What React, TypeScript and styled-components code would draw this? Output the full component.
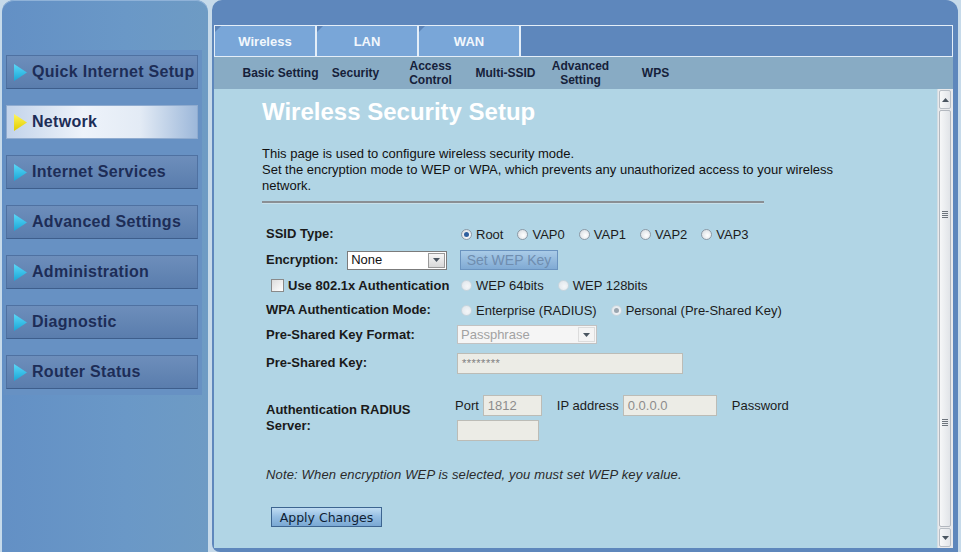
import React from 'react';
import styled, { createGlobalStyle, css } from 'styled-components';

const GlobalStyle = createGlobalStyle`
  html, body {
    margin: 0;
    padding: 0;
    background: #c6daea;
  }
  body {
    font-family: 'Liberation Sans', Arial, sans-serif;
  }
`;

const Page = styled.div`
  display: flex;
  width: 961px;
  height: 552px;
  overflow: hidden;
  background: #c6daea;
`;

/* ---------- left menu ---------- */

const Sidebar = styled.div`
  width: 206px;
  margin-left: 2px;
  padding-top: 50px;
  box-sizing: border-box;
  border-radius: 12px 12px 0 0;
  background: linear-gradient(to right, #6390c5, #6a98c7 60%, #6e9bc4);
  box-shadow: inset 0 1px 0 #8fb2d8;
`;

const Menu = styled.div`
  margin: 0 6px 0 2px;
  padding: 5px 2px 6px;
  display: flex;
  flex-direction: column;
  gap: 16px;
  background: #6791c3;
`;

const MenuButton = styled.div<{ $active?: boolean }>`
  width: 192px;
  height: 34px;
  box-sizing: border-box;
  display: flex;
  align-items: center;
  gap: 5px;
  padding-left: 7px;
  border: 1px solid #4f71a1;
  border-bottom-color: #3e5e8c;
  background: linear-gradient(#6d8ebb, #5a7dad);
  color: #1d2d57;
  font-size: 16px;
  font-weight: bold;
  letter-spacing: 0.3px;
  ${(p) =>
    p.$active &&
    css`
      border-color: #8fabcf;
      background: linear-gradient(to right, #c2d3ea, #eef3fa 40%, #e3ebf5 70%, #9db8da);
    `}
`;

const Arrow: React.FC<{ active?: boolean }> = ({ active }) => (
  <svg width="13" height="17" viewBox="0 0 13 17">
    <defs>
      <linearGradient id={active ? 'ay' : 'ab'} x1="0" y1="0" x2="0" y2="1">
        <stop offset="0" stopColor={active ? '#fff55a' : '#5ad8f8'} />
        <stop offset="1" stopColor={active ? '#e0cc00' : '#1aa6d6'} />
      </linearGradient>
    </defs>
    <polygon points="0,0 13,8.5 0,17" fill={`url(#${active ? 'ay' : 'ab'})`} />
  </svg>
);

/* ---------- right side ---------- */

const Main = styled.div`
  width: 746px;
  margin-left: 4px;
  padding: 25px 5px 4px 2px;
  box-sizing: border-box;
  display: flex;
  flex-direction: column;
  background: #5e87bc;
  border-radius: 10px 12px 0 8px;
`;

const TabBar = styled.div`
  display: flex;
  height: 32px;
  box-sizing: border-box;
  border: 1px solid #e4eef8;
`;

const Tab = styled.div`
  position: relative;
  width: 100px;
  border-right: 2px solid #e4eef8;
  background: #79a6d8;
  color: #f2f7fc;
  font-size: 13px;
  font-weight: bold;
  display: flex;
  align-items: center;
  justify-content: center;

  &::before {
    content: '';
    position: absolute;
    left: 0;
    top: 0;
    border-top: 6px solid #5c84b8;
    border-right: 6px solid transparent;
  }
`;

const SubNav = styled.div`
  display: flex;
  height: 32px;
  padding-left: 29px;
  background: #88abc4;
`;

const SubNavItem = styled.div`
  width: 75px;
  display: flex;
  align-items: center;
  justify-content: center;
  text-align: center;
  white-space: nowrap;
  font-size: 12px;
  font-weight: bold;
  line-height: 14px;
  color: #16213a;
`;

const Content = styled.div`
  flex: 1;
  display: flex;
  background: #b1d5e5;
  min-height: 0;
`;

const Body = styled.div`
  flex: 1;
  padding: 9px 0 0 48px;
`;

const Title = styled.h1`
  margin: 0;
  font-size: 24px;
  line-height: 28px;
  font-weight: bold;
  color: #ffffff;
`;

const Intro = styled.p`
  margin: 20px 0 0;
  width: 590px;
  font-size: 13px;
  line-height: 16px;
  color: #111;
`;

const Rule = styled.div`
  width: 502px;
  height: 2px;
  margin-top: 7px;
  background: #8a8f94;
  border-bottom: 1px solid #c8e0ea;
`;

const Form = styled.div`
  margin-top: 17px;
  padding-left: 4px;
  display: flex;
  flex-direction: column;
`;

const Row = styled.div<{ $h: number; $gap?: number }>`
  display: grid;
  grid-template-columns: 191px auto;
  align-items: center;
  height: ${(p) => p.$h}px;
  margin-top: ${(p) => p.$gap ?? 0}px;
`;

const Label = styled.div`
  display: flex;
  align-items: center;
  font-size: 13px;
  font-weight: bold;
  line-height: 16px;
  color: #1a1a1a;
`;

const Controls = styled.div`
  display: flex;
  align-items: center;
`;

const Choice = styled.label`
  display: inline-flex;
  align-items: center;
  gap: 4px;
  margin-left: 4px;
  margin-right: 10px;
  font-size: 13px;
  color: #1c1c1c;
`;

const RadioDot = styled.span<{ $checked?: boolean; $disabled?: boolean }>`
  position: relative;
  width: 11px;
  height: 11px;
  box-sizing: border-box;
  border-radius: 50%;
  border: 1px solid ${(p) => (p.$disabled ? '#c9d6de' : '#8d9aa6')};
  background: ${(p) =>
    p.$disabled
      ? 'radial-gradient(circle at 60% 60%, #f4f6f8, #dde4ea)'
      : 'radial-gradient(circle at 60% 60%, #ffffff, #d4d9de)'};

  ${(p) =>
    p.$checked &&
    css`
      &::after {
        content: '';
        position: absolute;
        left: 2px;
        top: 2px;
        width: 5px;
        height: 5px;
        border-radius: 50%;
        background: ${p.$disabled ? '#9aa6b0' : '#2f5f9e'};
      }
    `}
`;

const CheckBox = styled.span`
  width: 13px;
  height: 13px;
  box-sizing: border-box;
  margin: 0 4px 0 5px;
  border: 1px solid #8a8a8a;
  background: linear-gradient(135deg, #dcdcdc, #ffffff);
`;

const Select = styled.div<{ $w: number; $disabled?: boolean }>`
  display: flex;
  width: ${(p) => p.$w}px;
  height: 19px;
  box-sizing: border-box;
  border: 1px solid ${(p) => (p.$disabled ? '#c2c2c2' : '#7b7b7b')};
  background: ${(p) => (p.$disabled ? '#f5f5f5' : '#ffffff')};
  font-size: 13px;
  font-weight: normal;
  color: ${(p) => (p.$disabled ? '#a2a2a2' : '#111')};
`;

const SelectValue = styled.div`
  flex: 1;
  display: flex;
  align-items: center;
  padding-left: 3px;
`;

const SelectArrow = styled.div<{ $disabled?: boolean }>`
  width: 15px;
  display: flex;
  align-items: center;
  justify-content: center;
  margin: 1px;
  border: 1px solid ${(p) => (p.$disabled ? '#dcdcdc' : '#9a9a9a')};
  background: ${(p) => (p.$disabled ? '#f4f4f4' : 'linear-gradient(#f6f6f6, #d8d8d8)')};
`;

const TextBox = styled.div<{ $w: number; $h?: number }>`
  width: ${(p) => p.$w}px;
  height: ${(p) => p.$h ?? 21}px;
  box-sizing: border-box;
  display: flex;
  align-items: center;
  padding-left: 4px;
  border: 1px solid #bcbcb6;
  background: #ecece6;
  font-size: 13px;
  color: #8c8c8c;
`;

const Stars = styled.span`
  font-size: 11px;
  color: #808080;
  letter-spacing: 0.5px;
`;

const InlineText = styled.span<{ $ml?: number }>`
  font-size: 13px;
  color: #1c1c1c;
  margin-left: ${(p) => p.$ml ?? 0}px;
  margin-right: 4px;
`;

const RadiusGrid = styled.div`
  display: flex;
  flex-direction: column;
  gap: 4px;
  margin-left: -2px;
`;

const RadiusLine = styled.div`
  display: flex;
  align-items: center;
`;

const Button = styled.div<{ $disabled?: boolean }>`
  display: inline-flex;
  align-items: center;
  justify-content: center;
  height: 20px;
  box-sizing: border-box;
  padding: 0;
  white-space: nowrap;
  font-family: ${(p) => (p.$disabled ? "'Liberation Sans', Arial, sans-serif" : "'DejaVu Sans', Verdana, sans-serif")};
  font-size: ${(p) => (p.$disabled ? '14px' : '12.5px')};
  font-weight: normal;
  border: 1px solid ${(p) => (p.$disabled ? '#6a93bf' : '#3d6590')};
  background: ${(p) =>
    p.$disabled
      ? 'linear-gradient(#a9cbe7, #80aad4)'
      : 'linear-gradient(#c0dcf2, #94bde2 50%, #7aa8d3)'};
  color: ${(p) => (p.$disabled ? '#6f8daf' : '#0f1e33')};
`;

const Note = styled.div`
  margin-top: 22px;
  font-size: 13px;
  font-style: italic;
  letter-spacing: 0.15px;
  color: #2a2a2a;
`;

const ApplyRow = styled.div`
  margin-top: 25px;
  padding-left: 5px;
`;

/* ---------- fake scrollbar ---------- */

const Scrollbar = styled.div`
  width: 16px;
  display: flex;
  flex-direction: column;
  background: #e9eaec;
  border-left: 1px solid #d2dde4;
  box-sizing: border-box;
`;

const ScrollBtn = styled.div`
  height: 17px;
  margin: 1px 2px 1px 1px;
  display: flex;
  align-items: center;
  justify-content: center;
  border: 1px solid #b9bfc6;
  border-radius: 2px;
  background: linear-gradient(to right, #f7f8f9, #e3e6ea);
`;

const Thumb = styled.div`
  flex: 1;
  margin: 0 2px 0 1px;
  display: flex;
  flex-direction: column;
  justify-content: space-around;
  align-items: center;
  border: 1px solid #b3b8bf;
  border-radius: 2px;
  background: linear-gradient(to right, #f6f7f8, #e1e4e8);
`;

const Grip = styled.div`
  width: 6px;
  height: 7px;
  background: repeating-linear-gradient(#6d747c 0 1px, transparent 1px 2px);
`;

const Caret: React.FC<{ up?: boolean }> = ({ up }) => (
  <svg width="7" height="4" viewBox="0 0 7 4">
    <polygon points={up ? '0,4 3.5,0 7,4' : '0,0 7,0 3.5,4'} fill="#4a5560" />
  </svg>
);

const menuItems = [
  'Quick Internet Setup',
  'Network',
  'Internet Services',
  'Advanced Settings',
  'Administration',
  'Diagnostic',
  'Router Status',
];

const subNav: string[][] = [
  ['Basic Setting'],
  ['Security'],
  ['Access', 'Control'],
  ['Multi-SSID'],
  ['Advanced', 'Setting'],
  ['WPS'],
];

const ssidTypes = ['Root', 'VAP0', 'VAP1', 'VAP2', 'VAP3'];

const App: React.FC = () => {
  return (
    <Page>
      <GlobalStyle />
      <Sidebar>
        <Menu>
          {menuItems.map((item) => (
            <MenuButton key={item} $active={item === 'Network'}>
              <Arrow active={item === 'Network'} />
              {item}
            </MenuButton>
          ))}
        </Menu>
      </Sidebar>

      <Main>
        <TabBar>
          <Tab>Wireless</Tab>
          <Tab>LAN</Tab>
          <Tab>WAN</Tab>
        </TabBar>
        <SubNav>
          {subNav.map((lines) => (
            <SubNavItem key={lines.join(' ')}>
              <span>
                {lines.map((line, i) => (
                  <React.Fragment key={line}>
                    {i > 0 && <br />}
                    {line}
                  </React.Fragment>
                ))}
              </span>
            </SubNavItem>
          ))}
        </SubNav>

        <Content>
          <Body>
            <Title>Wireless Security Setup</Title>
            <Intro>
              This page is used to configure wireless security mode.
              <br />
              Set the encryption mode to WEP or WPA, which prevents any unauthorized access to your wireless
              network.
            </Intro>
            <Rule />

            <Form>
              <Row $h={26}>
                <Label>SSID Type:</Label>
                <Controls>
                  {ssidTypes.map((t) => (
                    <Choice key={t}>
                      <RadioDot $checked={t === 'Root'} />
                      {t}
                    </Choice>
                  ))}
                </Controls>
              </Row>

              <Row $h={26}>
                <Label>
                  Encryption:
                  <Select $w={100} style={{ marginLeft: 9 }}>
                    <SelectValue>None</SelectValue>
                    <SelectArrow>
                      <Caret />
                    </SelectArrow>
                  </Select>
                </Label>
                <Controls>
                  <Button $disabled style={{ marginLeft: 3, width: 98 }}>
                    Set WEP Key
                  </Button>
                </Controls>
              </Row>

              <Row $h={25}>
                <Label>
                  <CheckBox />
                  Use 802.1x Authentication
                </Label>
                <Controls>
                  <Choice>
                    <RadioDot $disabled />
                    WEP 64bits
                  </Choice>
                  <Choice>
                    <RadioDot $disabled />
                    WEP 128bits
                  </Choice>
                </Controls>
              </Row>

              <Row $h={24}>
                <Label>WPA Authentication Mode:</Label>
                <Controls>
                  <Choice>
                    <RadioDot $disabled />
                    Enterprise (RADIUS)
                  </Choice>
                  <Choice>
                    <RadioDot $disabled $checked />
                    Personal (Pre-Shared Key)
                  </Choice>
                </Controls>
              </Row>

              <Row $h={25}>
                <Label>Pre-Shared Key Format:</Label>
                <Controls>
                  <Select $w={140} $disabled>
                    <SelectValue>Passphrase</SelectValue>
                    <SelectArrow $disabled>
                      <Caret />
                    </SelectArrow>
                  </Select>
                </Controls>
              </Row>

              <Row $h={32}>
                <Label>Pre-Shared Key:</Label>
                <Controls>
                  <TextBox $w={226}>
                    <Stars>********</Stars>
                  </TextBox>
                </Controls>
              </Row>

              <Row $h={54} $gap={12}>
                <Label>
                  Authentication RADIUS
                  <br />
                  Server:
                </Label>
                <RadiusGrid>
                  <RadiusLine>
                    <InlineText>Port</InlineText>
                    <TextBox $w={59}>1812</TextBox>
                    <InlineText $ml={15}>IP address</InlineText>
                    <TextBox $w={94}>0.0.0.0</TextBox>
                    <InlineText $ml={15}>Password</InlineText>
                  </RadiusLine>
                  <RadiusLine>
                    <TextBox $w={82} style={{ marginLeft: 2 }} />
                  </RadiusLine>
                </RadiusGrid>
              </Row>

              <Note>Note: When encryption WEP is selected, you must set WEP key value.</Note>

              <ApplyRow>
                <Button style={{ width: 111 }}>Apply Changes</Button>
              </ApplyRow>
            </Form>
          </Body>

          <Scrollbar>
            <ScrollBtn>
              <Caret up />
            </ScrollBtn>
            <Thumb>
              <Grip />
              <Grip />
            </Thumb>
            <ScrollBtn>
              <Caret />
            </ScrollBtn>
          </Scrollbar>
        </Content>
      </Main>
    </Page>
  );
};

export default App;
